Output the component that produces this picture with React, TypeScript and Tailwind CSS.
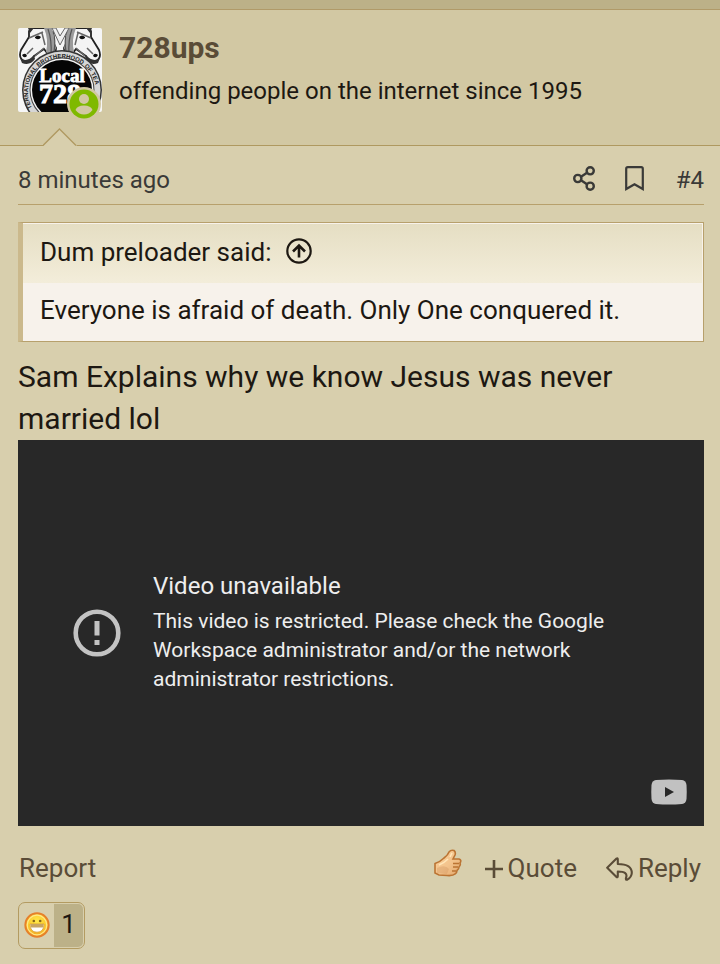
import React from "react";

function Avatar() {
  return (
    <svg viewBox="0 0 84 84" className="block size-[84px] rounded-xs bg-[#f6f6f6]" role="img" aria-label="728ups">
      <defs>
        <path id="ring" d="M14 80 A34 34 0 1 1 74 80" fill="none" />
        <g id="horse">
          <path d="M11 3 L11 9 L3 22 Q0 30 6 33 Q13 35 16 28 L26 21 L33 30 Q38 27 38 20 L28 0 L14 0 Z" fill="#f4f4f4" stroke="#222" strokeWidth="1.800" />
          <path d="M26 0 L34 0 L38 20 L34 29 L28 24 Q31 12 26 0Z" fill="#9a9a9a" />
          <path d="M30 1 Q34 12 33 27 M35 3 Q38 12 36 24" stroke="#555" strokeWidth="1.200" fill="none" />
          <path d="M11 10 L25 4 M24 5 L27 17 M15 20 L9 26 M17 28 L26 20" stroke="#666" strokeWidth="1.500" fill="none" />
          <path d="M17 9 Q20 6 23 9 Q21 13 17 10Z M4 27 Q8 24 9 28 Q6 31 4 27Z" fill="#111" />
          <path d="M10 0 L16 0 L12 5Z M2 30 Q9 35 16 27 L17 31 Q12 38 4 35Z" fill="#333" />
        </g>
      </defs>
      <use href="#horse" />
      <use href="#horse" transform="translate(84 0) scale(-1 1)" />
      <path d="M34 0 L42 17 L51 0 L47 0 L42 8 L38 0Z" fill="#eee" stroke="#666" />
      <circle cx="44" cy="62" r="40" fill="#343434" />
      <circle cx="44" cy="62" r="38.500" fill="#d6d6d6" />
      <circle cx="44" cy="62" r="32.500" fill="#444" />
      <circle cx="44" cy="62" r="31.500" fill="#f4f4f4" />
      <circle cx="44" cy="62" r="30" fill="#050505" />
      <g className="fill-[#222] font-['Liberation_Sans'] text-[6px] font-bold">
        <text><textPath href="#ring" startOffset="0">TERNATIONAL</textPath></text>
        <text><textPath href="#ring" startOffset="44">BROTHERHOOD</textPath></text>
        <text><textPath href="#ring" startOffset="94">OF TEA</textPath></text>
      </g>
      <text x="44" y="54" textAnchor="middle" className="fill-white stroke-white stroke-[0.8px] font-['Liberation_Serif'] text-[19px] font-bold">Local</text>
      <text x="21" y="75" className="fill-white stroke-white stroke-1 font-['Liberation_Serif'] text-[28px] font-bold">728</text>
    </svg>
  );
}

function Online() {
  return (
    <svg viewBox="0 0 34 34" className="absolute right-px -bottom-[9px] size-[34px]" aria-hidden="true">
      <circle cx="17" cy="17" r="17" fill="#d2c8a3" />
      <circle cx="17" cy="17" r="14.500" fill="#7fb900" />
      <circle cx="17" cy="12" r="5" fill="#d2c8a3" />
      <path d="M8.500 23 Q10 18.500 17 18.500 Q24 18.500 25.500 23 Q22 27.500 17 27.500 Q12 27.500 8.500 23Z" fill="#d2c8a3" />
    </svg>
  );
}

function ShareIcon() {
  return (
    <svg viewBox="0 0 22 25" className="h-[25px] w-[22px]" fill="none" stroke="currentColor" strokeWidth="2.400" aria-hidden="true">
      <circle cx="4.800" cy="12.500" r="3.600" />
      <circle cx="17.200" cy="4.800" r="3.600" />
      <circle cx="17.200" cy="20.200" r="3.600" />
      <path d="M8 10.700 L14 6.700 M8 14.300 L14 18.300" />
    </svg>
  );
}

function BookmarkIcon() {
  return (
    <svg viewBox="0 0 19 25" className="h-[25px] w-[19px]" fill="none" stroke="currentColor" strokeWidth="2.200" aria-hidden="true">
      <path d="M1.200 23 V2.800 Q1.200 1.200 2.800 1.200 H16.200 Q17.800 1.200 17.800 2.800 V23 L9.500 18.200 Z" />
    </svg>
  );
}

function UpIcon() {
  return (
    <svg viewBox="0 0 26 26" className="size-[26px]" fill="none" stroke="currentColor" strokeWidth="2.200" aria-hidden="true">
      <circle cx="13" cy="13" r="11.700" />
      <path d="M13 19.500 V8 M7 13.500 L13 7.500 L19 13.500" strokeWidth="2.600" />
    </svg>
  );
}

function AlertIcon() {
  return (
    <svg viewBox="0 0 48 48" className="size-[48px] shrink-0" aria-hidden="true">
      <circle cx="24" cy="24" r="21.300" fill="none" stroke="#c3c3c3" strokeWidth="4.600" />
      <path d="M21.500 12 H26.500 V26.500 H21.500Z M21.500 31 H26.500 V36 H21.500Z" fill="#c3c3c3" />
    </svg>
  );
}

function YouTubeIcon() {
  return (
    <svg viewBox="0 0 36 26" className="h-[26px] w-[36px]" aria-hidden="true">
      <path d="M5 1 Q18 0 31 1 Q35 1.500 35.500 6 Q36 13 35.500 20 Q35 24.500 31 25 Q18 26 5 25 Q1 24.500 .5 20 Q0 13 .5 6 Q1 1.500 5 1Z" fill="#c1c1c1" />
      <path d="M14 8 L23 13 L14 18Z" fill="#282828" />
    </svg>
  );
}

function ThumbIcon() {
  return (
    <svg viewBox="0 0 28 28" className="size-[28px]" aria-hidden="true">
      <defs>
        <linearGradient id="skin" x1="0" y1="0" x2="1" y2="1">
          <stop offset="0" stopColor="#fbd29a" />
          <stop offset=".55" stopColor="#f3c38c" />
          <stop offset="1" stopColor="#e0a468" />
        </linearGradient>
      </defs>
      <path d="M1 14.500 Q6 13 10 9 Q14 6 15 3 Q17 .5 20 1.500 Q22 3 21 6 L19 10 H25 Q28 11 26 14 Q27 16 25 18 Q25 20 23 21.500 Q23 24 21 25 Q19 27 13 26.500 L5 26 L1 24Z" fill="url(#skin)" stroke="#bb7433" strokeWidth="1.600" />
      <path d="M19 14.500 H25 M19 18 H24 M18 22 H22" stroke="#bb7433" strokeWidth="1.400" />
      <path d="M5 16 Q10 14 14 10 M18 4 L16 8" stroke="#ffe5b8" strokeWidth="1.600" fill="none" />
      <path d="M3 19 Q11 15 15 20 L13 25 L3 24Z" fill="#c98a55" opacity=".3" />
    </svg>
  );
}

function PlusIcon() {
  return (
    <svg viewBox="0 0 18 18" className="size-[18px]" stroke="currentColor" strokeWidth="2.600" aria-hidden="true">
      <path d="M9 0 V18 M0 9 H18" />
    </svg>
  );
}

function ReplyIcon() {
  return (
    <svg viewBox="0 0 27 24" className="h-[24px] w-[27px]" fill="none" stroke="currentColor" strokeWidth="2.100" strokeLinejoin="round" aria-hidden="true">
      <path d="M1.200 10.800 L10.500 1.600 Q11.800 .8 11.800 2.500 V7 Q25.800 7 25.800 16 Q25.500 20.500 21 22.800 Q19.500 23 20 21 Q22.500 14.500 11.800 14.500 V19 Q11.800 20.800 10.500 20Z" />
    </svg>
  );
}

function LaughIcon() {
  return (
    <svg viewBox="0 0 26 26" className="size-[26px]" aria-hidden="true">
      <defs>
        <radialGradient id="face" cx=".5" cy=".35" r=".65">
          <stop offset="0" stopColor="#ffe94a" />
          <stop offset=".6" stopColor="#fccb2c" />
          <stop offset="1" stopColor="#ef9a22" />
        </radialGradient>
      </defs>
      <circle cx="13" cy="13" r="11.700" fill="url(#face)" stroke="#e6802a" strokeWidth="1.900" />
      <circle cx="13" cy="13" r="9.800" fill="none" stroke="#ffe98a" strokeWidth="1.200" />
      <circle cx="9.800" cy="9" r="1.300" fill="#86651a" />
      <circle cx="16.200" cy="9" r="1.300" fill="#86651a" />
      <path d="M6 12 H20 Q20 20.200 13 20.200 Q6 20.200 6 12Z" fill="#fff" stroke="#d39a35" strokeWidth=".8" />
      <path d="M6.500 12 H19.500 L19 15.500 H7Z" fill="#c9a562" />
    </svg>
  );
}

export default function App() {
  return (
    <div className="min-h-screen bg-[#d8cfad] font-[Roboto,sans-serif] text-[#1d1812]">
      <div className="h-[10px] border-b border-[#b09a68] bg-[#bcb188]" />
      <article>
        <header className="relative flex h-[136px] gap-[17px] border-b border-[#af9960] bg-[#d2c8a3] px-[18px] pt-[18px]">
          <div className="relative size-[84px] shrink-0">
            <Avatar />
            <Online />
          </div>
          <div>
            <h1 className="text-[30px] leading-[40px] font-bold"><a href="#user" className="text-[#5a4c37]">728ups</a></h1>
            <p className="mt-[4px] text-[24px] leading-[38px]">offending people on the internet since 1995</p>
          </div>
          <svg viewBox="0 0 34 18" className="absolute -bottom-[1px] left-[43px] h-[18px] w-[34px]" aria-hidden="true">
            <path d="M0 18 L17 1 L34 18Z" fill="#d8cfad" />
            <path d="M0 17.500 L16.500 1 L33 17.500" fill="none" stroke="#af9960" strokeWidth="1.300" />
          </svg>
        </header>
        <div className="pr-[16px] pl-[18px]">
          <div className="flex h-[59px] items-center border-b border-[#b7a06c] pt-[9px] text-[24px] text-[#3a3a38]">
            <time className="grow">8 minutes ago</time>
            <button aria-label="Share" className="mr-[30px] pb-[2px]"><ShareIcon /></button>
            <button aria-label="Bookmark" className="mr-[32px] pb-[2px]"><BookmarkIcon /></button>
            <a href="#4">#4</a>
          </div>
          <blockquote className="mt-[17px] border border-l-[5px] border-[#b7a06c] border-l-[#cbb98c] bg-[#f7f2eb] text-[26px]">
            <div className="mt-px mr-px flex h-[59px] items-center gap-[15px] bg-linear-to-b from-[#e5dec3] to-[#f3edda] pb-[3px] pl-[17px]">
              <cite className="not-italic">Dum preloader said:</cite>
              <a href="#quoted" aria-label="Go to post" className="pb-[2px]"><UpIcon /></a>
            </div>
            <p className="flex h-[58px] items-center pb-[4px] pl-[17px]">Everyone is afraid of death. Only One conquered it.</p>
          </blockquote>
          <p className="mt-[14px] text-[30px] leading-[42px]">Sam Explains why we know Jesus was never married lol</p>
          <section className="relative flex aspect-video items-center gap-[32px] bg-[#282828] px-[55px] text-[#eeeeee]">
            <AlertIcon />
            <div>
              <h2 className="mb-[5px] text-[24px] leading-[31px]">Video unavailable</h2>
              <p className="text-[21px] leading-[29px]">This video is restricted. Please check the Google Workspace administrator and/or the network administrator restrictions.</p>
            </div>
            <a href="#video" aria-label="Watch on YouTube" className="absolute right-[17px] bottom-[21px]"><YouTubeIcon /></a>
          </section>
          <footer className="mt-[23px] flex h-[40px] items-center pr-[3px] text-[26px] text-[#5a4c37]">
            <a href="#report" className="grow pl-px">Report</a>
            <button aria-label="Like" className="mr-[23px] pb-[12px]"><ThumbIcon /></button>
            <button className="mr-[29px] flex items-center gap-[5px]"><PlusIcon />Quote</button>
            <button className="flex items-center gap-[5px]"><ReplyIcon />Reply</button>
          </footer>
          <button aria-label="1 reaction" className="mt-[13px] flex h-[47px] w-[67px] rounded-[7px] border border-[#b39b61] p-px text-[26px]">
            <span className="flex w-[34px] items-center justify-center self-stretch"><LaughIcon /></span>
            <span className="flex grow items-center justify-center self-stretch rounded-r-[5px] bg-[#bcb188] pb-px">1</span>
          </button>
        </div>
      </article>
    </div>
  );
}
